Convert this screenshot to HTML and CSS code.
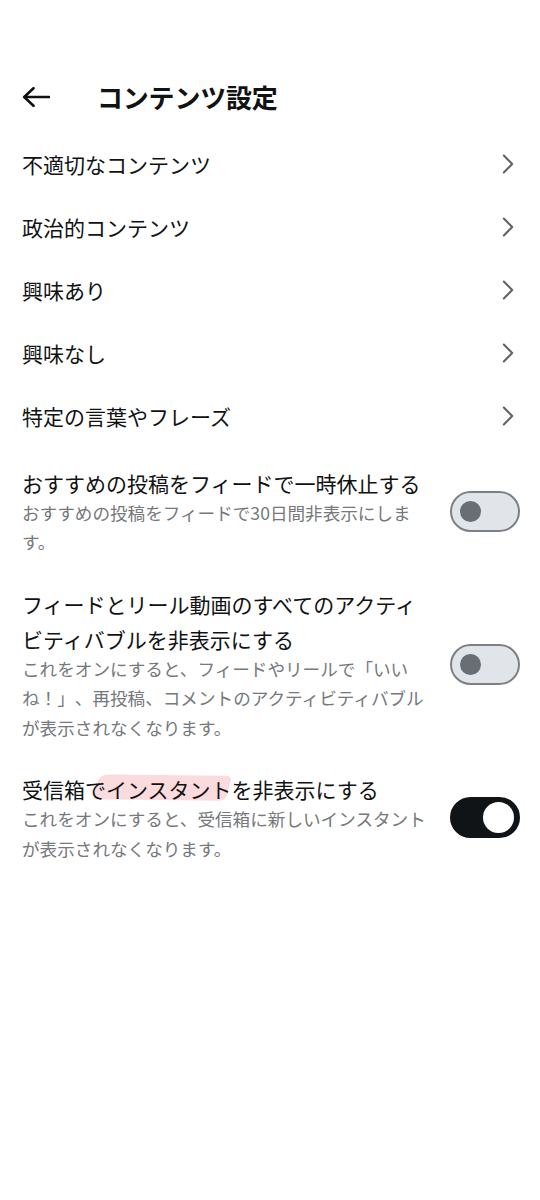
FILE: index.html
```html
<!DOCTYPE html>
<html lang="ja">
<head>
<meta charset="utf-8">
<title>コンテンツ設定</title>
<link rel="stylesheet" href="styles.css">
</head>
<body>
<header class="topbar">
  <svg class="back" viewBox="0 0 28 20" width="28" height="20" aria-hidden="true">
    <path d="M27 10H2.5M11.5 1.2L2.2 10l9.3 8.8" fill="none" stroke="#111" stroke-width="2.6" stroke-linecap="round" stroke-linejoin="round"/>
  </svg>
  <h1 class="title">コンテンツ設定</h1>
</header>

<ul class="menu">
  <li class="menu-item"><span>不適切なコンテンツ</span><svg class="chev" viewBox="0 0 12 20" width="12" height="20"><path d="M1.8 1.5l8.4 8.5-8.4 8.5" fill="none" stroke="#5f6266" stroke-width="2" stroke-linecap="round" stroke-linejoin="round"/></svg></li>
  <li class="menu-item"><span>政治的コンテンツ</span><svg class="chev" viewBox="0 0 12 20" width="12" height="20"><path d="M1.8 1.5l8.4 8.5-8.4 8.5" fill="none" stroke="#5f6266" stroke-width="2" stroke-linecap="round" stroke-linejoin="round"/></svg></li>
  <li class="menu-item"><span>興味あり</span><svg class="chev" viewBox="0 0 12 20" width="12" height="20"><path d="M1.8 1.5l8.4 8.5-8.4 8.5" fill="none" stroke="#5f6266" stroke-width="2" stroke-linecap="round" stroke-linejoin="round"/></svg></li>
  <li class="menu-item"><span>興味なし</span><svg class="chev" viewBox="0 0 12 20" width="12" height="20"><path d="M1.8 1.5l8.4 8.5-8.4 8.5" fill="none" stroke="#5f6266" stroke-width="2" stroke-linecap="round" stroke-linejoin="round"/></svg></li>
  <li class="menu-item"><span>特定の言葉やフレーズ</span><svg class="chev" viewBox="0 0 12 20" width="12" height="20"><path d="M1.8 1.5l8.4 8.5-8.4 8.5" fill="none" stroke="#5f6266" stroke-width="2" stroke-linecap="round" stroke-linejoin="round"/></svg></li>
</ul>

<div class="settings">
  <section class="setting">
    <div class="setting-text">
      <p class="setting-title">おすすめの投稿をフィードで一時休止する</p>
      <p class="setting-desc">おすすめの投稿をフィードで30日間非表示にします。</p>
    </div>
    <div class="toggle"><span class="knob"></span></div>
  </section>

  <section class="setting">
    <div class="setting-text">
      <p class="setting-title">フィードとリール動画のすべてのアクティビティバブルを非表示にする</p>
      <p class="setting-desc">これをオンにすると、フィードやリールで「いいね！」、再投稿、コメントのアクティビティバブルが表示されなくなります。</p>
    </div>
    <div class="toggle"><span class="knob"></span></div>
  </section>

  <section class="setting">
    <div class="setting-text">
      <p class="setting-title">受信箱で<span class="mark">インスタント</span>を非表示にする</p>
      <p class="setting-desc">これをオンにすると、受信箱に新しいインスタントが表示されなくなります。</p>
    </div>
    <div class="toggle toggle-on"><span class="knob"></span></div>
  </section>
</div>
</body>
</html>
```

FILE: styles.css
```css
html {
  margin: 0;
  padding: 0;
  background: #ffffff;
}

body {
  margin: 0;
  padding: 0;
  font-family: "Noto Sans CJK JP", "Noto Sans", sans-serif;
  color: #111213;
  text-spacing-trim: space-all;
}

.topbar {
  display: flex;
  align-items: center;
  height: 54px;
  margin-top: 70px;
  padding-left: 22px;
  gap: 47px;
}

.back {
  display: block;
  flex: none;
}

.title {
  margin: 0;
  font-size: 26px;
  font-weight: 700;
  line-height: 54px;
  letter-spacing: -0.2px;
}

.menu {
  list-style: none;
  margin: 0;
  padding: 8.5px 0 0;
}

.menu-item {
  display: flex;
  align-items: center;
  justify-content: space-between;
  height: 63px;
  padding: 0 26px 0 22px;
  font-size: 21px;
}

.chev {
  display: block;
  flex: none;
}

.settings {
  margin-top: 3px;
}

.setting {
  display: flex;
  align-items: center;
  gap: 18px;
  padding: 15px 20px 15px 22px;
}

.setting-text {
  flex: 1;
  min-width: 0;
}

.setting-title {
  margin: 0;
  font-size: 21px;
  line-height: 35px;
  color: #111213;
}

.setting-desc {
  margin: -3px 0 0;
  font-size: 17.6px;
  line-height: 29.5px;
  color: #75787c;
}

.mark {
  position: relative;
}

.mark::before {
  content: "";
  position: absolute;
  left: -10px;
  right: 3px;
  top: 1px;
  bottom: 4px;
  background: rgba(242, 150, 158, 0.34);
  border-radius: 8px 5px 6px 3px;
  transform: skewX(-14deg) rotate(0.6deg);
  z-index: -1;
}

.toggle {
  flex: none;
  box-sizing: border-box;
  width: 70px;
  height: 41px;
  border-radius: 21px;
  border: 2.5px solid #7c8086;
  background: #e1e4e8;
  display: flex;
  align-items: center;
  padding-left: 8px;
}

.knob {
  display: block;
  width: 21px;
  height: 21px;
  border-radius: 50%;
  background: #696d74;
}

.toggle-on {
  background: #111417;
  border-color: #111417;
  justify-content: flex-end;
  padding-left: 0;
  padding-right: 4.5px;
}

.toggle-on .knob {
  width: 31px;
  height: 31px;
  background: #ffffff;
}
```
